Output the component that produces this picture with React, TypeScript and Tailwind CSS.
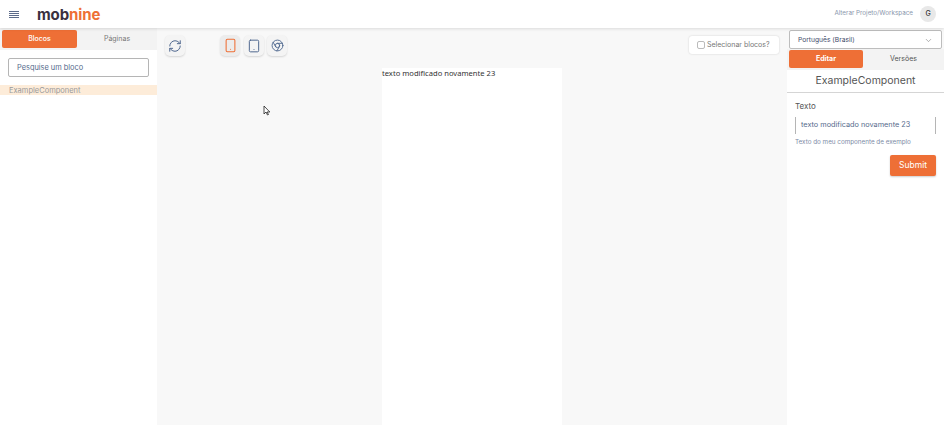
import { RefreshCw, Smartphone, Tablet, Chrome, ChevronDown } from "lucide-react";

const font = "font-['Inter','Liberation_Sans',sans-serif]";

export default function App() {
  return (
    <div className={`w-[944px] h-[425px] overflow-hidden bg-white flex flex-col ${font}`}>
      <header className="h-[28px] shrink-0 bg-white flex items-center shadow-[0_1px_3px_rgba(0,0,0,0.12)] relative z-10">
        <div className="w-[37px] pl-[9px] flex">
          <svg width="10" height="7" viewBox="0 0 10 7">
            <path d="M0 .5h10M0 2.5h10M0 4.5h10M0 6.5h10" stroke="#4a5a7c" strokeWidth="0.9" />
          </svg>
        </div>
        <div className="font-bold text-[15px] tracking-[-0.1px] leading-none">
          <span className="text-[#3a3040]">mob</span>
          <span className="text-[#ee6f36]">nine</span>
        </div>
        <div className="ml-auto flex items-center gap-[7px] pr-[8px]">
          <span className="text-[6.3px] text-[#8a96ad]">Alterar Projeto/Workspace</span>
          <div className="w-[16px] h-[16px] rounded-full bg-[#e8e8e8] flex items-center justify-center text-[7px] font-medium text-[#333]">G</div>
        </div>
      </header>
      <div className="flex-1 flex min-h-0">
        <aside className="w-[157px] shrink-0 bg-white flex flex-col">
          <div className="h-[22px] pl-[2px] pt-[2px] bg-[#f3f3f3] flex">
            <div className="w-[75px] h-[18px] bg-[#ee6f36] rounded-[2px] text-white text-[7px] font-medium flex items-center justify-center">Blocos</div>
            <div className="flex-1 h-[18px] text-[#777] text-[7px] flex items-center justify-center">Páginas</div>
          </div>
          <div className="px-[8px] pt-[8px]">
            <div className="h-[19px] border border-[#b5b5b5] rounded-[2px] pl-[8px] flex items-center text-[7.4px] text-[#556a8c]">Pesquise um bloco</div>
          </div>
          <div className="mt-[8px] h-[10px] bg-[#fdecd9] pl-[9px] pt-[1px] flex items-center text-[7.5px] text-[#999]">ExampleComponent</div>
        </aside>
        <main className="flex-1 bg-[#f8f8f8] flex flex-col relative">
          <div className="h-[40px] shrink-0 flex items-start pt-[7px] pl-[8px] pr-[8px]">
            <button className="w-[20px] h-[21px] rounded-[5px] bg-[#f4f4f4] shadow-[0_1px_2px_rgba(0,0,0,0.14)] flex items-center justify-center">
              <RefreshCw size={14} strokeWidth={1.7} color="#4f678f" />
            </button>
            <div className="ml-[35px] flex gap-[3.5px]">
              <button className="w-[20px] h-[21px] rounded-[5px] bg-[#ececec] shadow-[0_1px_2px_rgba(0,0,0,0.12)] flex items-center justify-center">
                <Smartphone size={15} strokeWidth={1.7} color="#ee6f36" />
              </button>
              <button className="w-[20px] h-[21px] rounded-[5px] bg-[#f4f4f4] shadow-[0_1px_2px_rgba(0,0,0,0.14)] flex items-center justify-center">
                <Tablet size={14} strokeWidth={1.7} color="#4f678f" />
              </button>
              <button className="w-[20px] h-[21px] rounded-[5px] bg-[#f4f4f4] shadow-[0_1px_2px_rgba(0,0,0,0.14)] flex items-center justify-center">
                <Chrome size={13} strokeWidth={1.7} color="#4f678f" />
              </button>
            </div>
            <div className="ml-auto mt-[1px] w-[90px] h-[18px] rounded-[3px] bg-white shadow-[0_0_2px_rgba(0,0,0,0.18)] flex items-center pl-[8px] gap-[2px] text-[7px] text-[#777]">
              <span className="w-[8px] h-[8px] border border-[#bbb] rounded-[2px] shrink-0" />
              <span className="whitespace-nowrap">Selecionar blocos?</span>
            </div>
          </div>
          <div className="flex-1 flex justify-center">
            <div className="w-[180px] bg-white text-[7.6px] leading-[11px] text-[#333] font-['Noto_Sans',sans-serif] whitespace-nowrap">texto modificado novamente 23</div>
          </div>
          <svg className="absolute left-[106px] top-[77px]" width="8" height="11" viewBox="0 0 8 11">
            <path d="M1 1v8l2-2 1.5 3 1-.5L4 7h2.8z" fill="#fff" stroke="#222" strokeWidth="0.8" />
          </svg>
        </main>
        <aside className="w-[157px] shrink-0 bg-white flex flex-col">
          <div className="h-[21px] bg-[#f8f8f8] pl-[2px] pr-[2px] pt-[2px]">
            <div className="h-[19px] border border-[#bdbdbd] rounded-[2px] bg-white pl-[8px] pr-[8px] pt-[1px] flex items-center justify-between text-[6.7px] text-[#3f4d6b]">
              <span>Português (Brasil)</span>
              <ChevronDown size={9} strokeWidth={1.5} color="#777" />
            </div>
          </div>
          <div className="h-[21px] bg-[#f3f3f3] pl-[2px] pt-[1px] flex">
            <div className="w-[74px] h-[18px] bg-[#ee6f36] rounded-[2px] text-white text-[7px] font-bold flex items-center justify-center">Editar</div>
            <div className="flex-1 h-[18px] text-[#555] text-[7px] flex items-center justify-center">Versões</div>
          </div>
          <div className="h-[23px] border-b border-[#d5d5d5] flex items-center justify-center text-[10.5px] text-[#555]">ExampleComponent</div>
          <div className="pl-[8px] pr-[8px] pt-[8px]">
            <div className="text-[8px] leading-[10px] text-[#555]">Texto</div>
            <div className="mt-[6px] h-[17px] border-x border-[#b5b5b5] pl-[5px] flex items-center text-[7.3px] text-[#556a8c] whitespace-nowrap overflow-hidden">texto modificado novamente 23</div>
            <div className="mt-[4px] text-[6.3px] leading-[8px] text-[#7c8aa5] whitespace-nowrap">Texto do meu componente de exemplo</div>
            <div className="mt-[9px] flex justify-end">
              <button className="w-[46px] h-[21px] bg-[#ee6f36] rounded-[2px] text-white text-[8.5px] shadow-[0_1px_2px_rgba(0,0,0,0.2)]">Submit</button>
            </div>
          </div>
        </aside>
      </div>
    </div>
  );
}
